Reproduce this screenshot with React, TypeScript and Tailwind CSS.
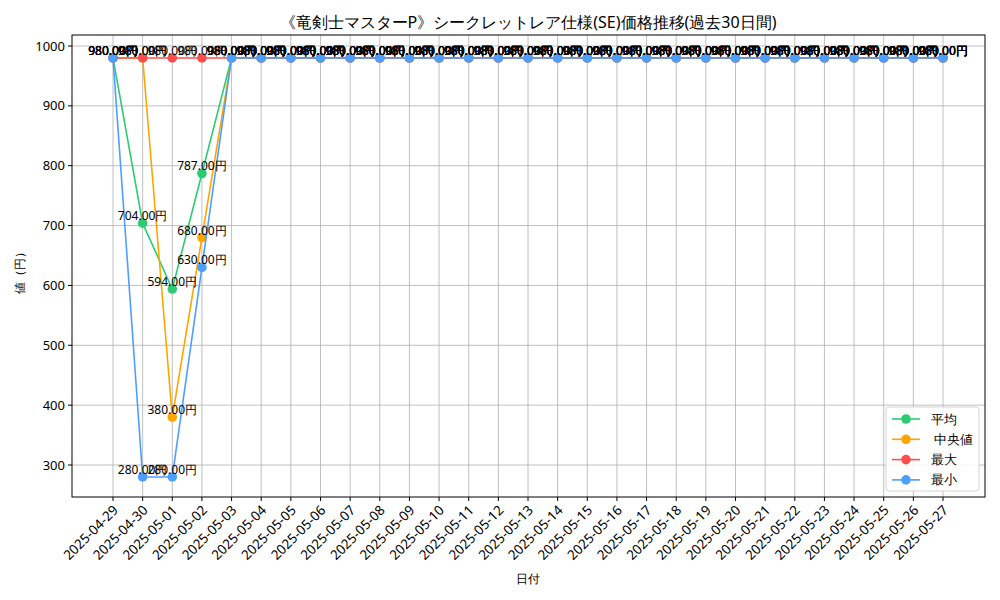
const L = 72, R = 985, T = 35, B = 497;
const x0 = 113, dx = (943 - 113) / 28;
const yOf = (v: number) => 46 + (1000 - v) * ((465 - 46) / 700);
const dates = Array.from({ length: 29 }, (_, i) => {
  const d = new Date(Date.UTC(2025, 3, 29 + i));
  return d.toISOString().slice(0, 10);
});
const fill = (head: number[]) => [...head, ...Array(29 - head.length).fill(980)];
const series = [
  { name: "平均", color: "#2ecc71", data: fill([980, 704, 594, 787]) },
  { name: " 中央値", color: "#ffa500", data: fill([980, 980, 380, 680]) },
  { name: "最大", color: "#ff4d4d", data: fill([]) },
  { name: "最小", color: "#4d9fff", data: fill([980, 280, 280, 630]) },
];
const yTicks = [300, 400, 500, 600, 700, 800, 900, 1000];

export default function App() {
  return (
    <div className="h-[600px] w-[1000px] bg-white font-['Noto_Sans_CJK_JP','DejaVu_Sans',sans-serif]">
      <svg width={1000} height={600} className="block">
        <text x={528} y={28} textAnchor="middle" fontSize={16} fill="#000">
          《竜剣士マスターP》シークレットレア仕様(SE)価格推移(過去30日間)
        </text>
        {dates.map((_, i) => (
          <line key={i} x1={x0 + i * dx} x2={x0 + i * dx} y1={T} y2={B} stroke="#b0b0b0" strokeWidth={0.8} />
        ))}
        {yTicks.map((v) => (
          <g key={v}>
            <line x1={L} x2={R} y1={yOf(v)} y2={yOf(v)} stroke="#b0b0b0" strokeWidth={0.8} />
            <line x1={L - 4} x2={L} y1={yOf(v)} y2={yOf(v)} stroke="#000" />
            <text x={L - 7} y={yOf(v) + 4.5} textAnchor="end" fontSize={13}>{v}</text>
          </g>
        ))}
        {series.map((s) => (
          <g key={s.name}>
            <polyline
              points={s.data.map((v, i) => `${x0 + i * dx},${yOf(v)}`).join(" ")}
              fill="none"
              stroke={s.color}
              strokeWidth={1.6}
            />
            {s.data.map((v, i) => (
              <circle key={i} cx={x0 + i * dx} cy={yOf(v)} r={4.8} fill={s.color} />
            ))}
          </g>
        ))}
        {series.map((s) =>
          s.data.map((v, i) => (
            <text key={s.name + i} x={x0 + i * dx} y={yOf(v) - 3} textAnchor="middle" fontSize={12} fill="#000">
              {v.toFixed(2)}円
            </text>
          ))
        )}
        <rect x={L} y={T} width={R - L} height={B - T} fill="none" stroke="#000" strokeWidth={1} />
        {dates.map((d, i) => {
          const x = x0 + i * dx;
          return (
            <g key={d}>
              <line x1={x} x2={x} y1={B} y2={B + 4} stroke="#000" />
              <text x={x + 6} y={511} textAnchor="end" fontSize={13.5} transform={`rotate(-45 ${x + 6} 511)`}>
                {d}
              </text>
            </g>
          );
        })}
        <text x={528} y={583} textAnchor="middle" fontSize={12}>日付</text>
        <text x={24} y={270} textAnchor="middle" fontSize={12} transform="rotate(-90 24 270)">値（円）</text>
        <rect x={886} y={407} width={93} height={84} rx={3} fill="#fff" fillOpacity={0.85} stroke="#d5d5d5" />
        {series.map((s, k) => {
          const y = 419 + k * 20.3;
          return (
            <g key={s.name}>
              <line x1={892} x2={920} y1={y} y2={y} stroke={s.color} strokeWidth={1.6} />
              <circle cx={906} cy={y} r={4.8} fill={s.color} />
              <text x={931} y={y + 4.5} fontSize={12.5} className="whitespace-pre">{s.name}</text>
            </g>
          );
        })}
      </svg>
    </div>
  );
}
